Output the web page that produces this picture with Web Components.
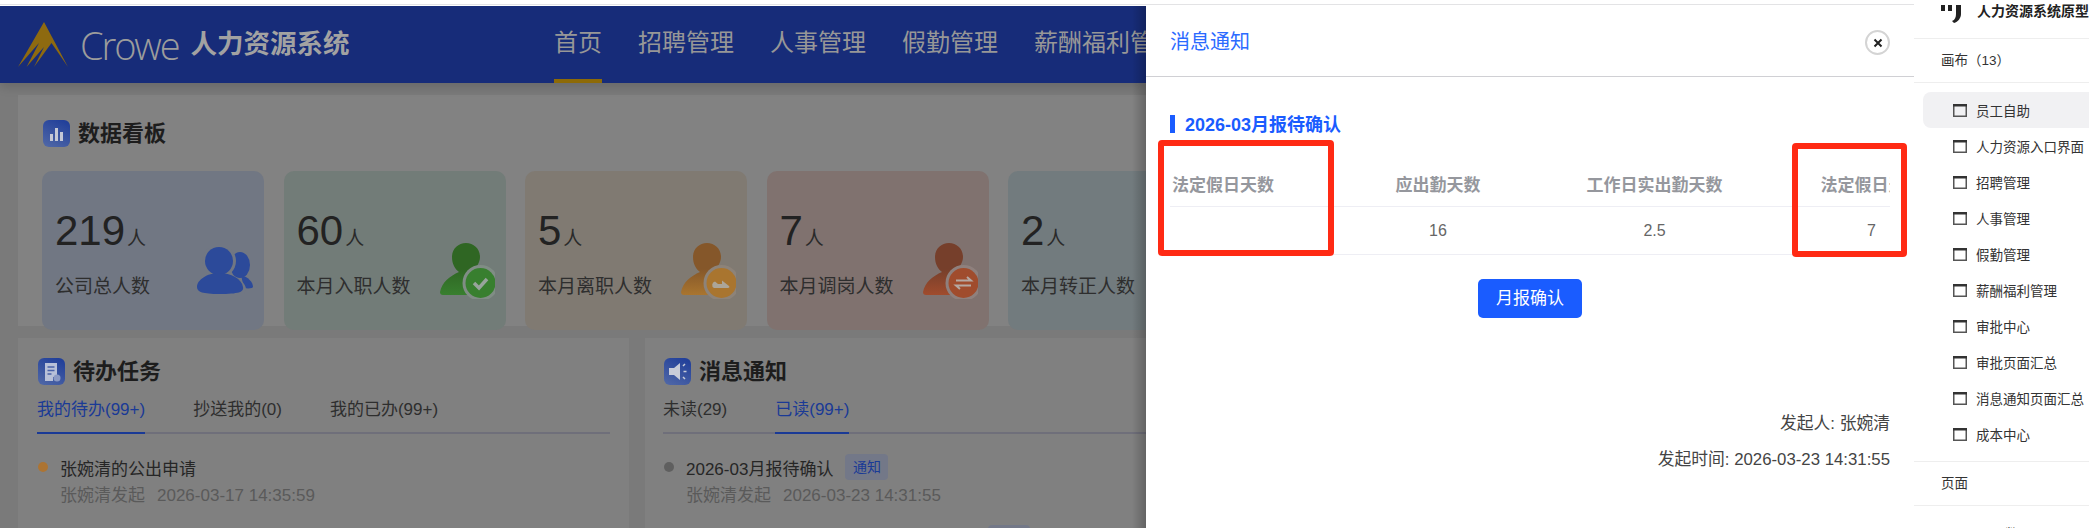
<!DOCTYPE html>
<html lang="zh">
<head>
<meta charset="utf-8">
<title>Crowe</title>
<style>
	html, body { margin: 0; padding: 0; background: #fff; }
	body { width: 2089px; height: 528px; overflow: hidden; font-family: "Liberation Sans", "Noto Sans CJK SC", sans-serif; }
</style>
</head>
<body>
<hr-shot>
	<hr-dashboard slot="left"></hr-dashboard>
	<hr-drawer slot="middle"></hr-drawer>
	<hr-sidebar slot="right"></hr-sidebar>
</hr-shot>
<script>
const FONT = `"Liberation Sans", "Noto Sans CJK SC", sans-serif`;

class Shot extends HTMLElement {
	constructor() {
		super();
		this.attachShadow({ mode: 'open' });
		this.shadowRoot.innerHTML = `
			<style>
				:host { display: grid; grid-template-columns: 1914px 175px; width: 2089px; height: 528px; overflow: hidden; background: #fff; font-family: ${FONT}; }
				div.top { height: 4px; border-bottom: 1px solid #e3e3e5; margin-bottom: 1px; }
				div.row { display: grid; grid-template-columns: 1146px 768px; height: 522px; }
				::slotted(*) { min-width: 0; }
			</style>
			<div>
				<div class="top"></div>
				<div class="row">
					<slot name="left"></slot>
					<slot name="middle"></slot>
				</div>
			</div>
			<slot name="right"></slot>
		`;
	}
}

// person with a round badge, head goes darker to the top like the original png
const personIcon = (id, dark, light, halo, badge) => `
	<svg slot="icon" width="55" height="56" viewBox="0 0 55 56">
		<defs><linearGradient id="${id}" x1="0" y1="0" x2="0" y2="1"><stop offset="0" stop-color="${dark}"/><stop offset=".5" stop-color="${dark}"/><stop offset="1" stop-color="${light}"/></linearGradient></defs>
		<path d="M26 0c8 0 14 6 14 14 0 6-4 11-8 14l3 2c5 3 8 8 8 14 0 5-3 8-6 8H3c-2 0-3-1-3-3 2-10 10-16 19-20-4-3-7-8-7-15C12 6 18 0 26 0z" fill="url(#${id})"/>
		<circle cx="40.500" cy="40" r="18" fill="${halo}"/>
		<circle cx="40.500" cy="40" r="15" fill="${light}"/>
		${badge}
	</svg>`;

class StatCard extends HTMLElement {
	constructor() {
		super();
		this.attachShadow({ mode: 'open' });
		this.shadowRoot.innerHTML = `
			<style>
				:host { display: block; box-sizing: border-box; height: 159px; border-radius: 10px; padding: 35px 0 0 13px; position: relative; background: var(--bg); color: #222; }
				div.num { font-size: 42px; line-height: 50px; height: 50px; white-space: nowrap; }
				div.num span { font-size: 19px; line-height: 20px; margin-left: 2px; color: #2a2a2a; }
				div.label { font-size: 19px; line-height: 24px; margin-top: 19px; color: #2e2e2e; white-space: nowrap; }
				div.icon { position: absolute; right: 11px; top: var(--icon-top, 72px); line-height: 0; }
			</style>
			<div class="num"><slot name="num"></slot><span><slot name="unit"></slot></span></div>
			<div class="label"><slot name="label"></slot></div>
			<div class="icon"><slot name="icon"></slot></div>
		`;
	}
}

class PanelTitle extends HTMLElement {
	constructor() {
		super();
		this.attachShadow({ mode: 'open' });
		this.shadowRoot.innerHTML = `
			<style>
				:host { display: flex; align-items: center; gap: 8px; height: 27px; font-size: 22px; font-weight: 700; color: #1d1d1d; }
				span { margin-top: -5px; }
			</style>
			<slot name="icon"></slot><span><slot></slot></span>
		`;
	}
}

class TabBar extends HTMLElement {
	constructor() {
		super();
		this.attachShadow({ mode: 'open' });
		this.shadowRoot.innerHTML = `
			<style>
				:host { display: flex; align-items: flex-start; gap: 48px; border-bottom: 2px solid #6f6f7a; height: 34px; margin: 13px 0 0 -1px; font-size: 17px; }
			</style>
			<slot></slot>
		`;
	}
}

class TabItem extends HTMLElement {
	constructor() {
		super();
		this.attachShadow({ mode: 'open' });
		this.shadowRoot.innerHTML = `
			<style>
				:host { display: block; height: 34px; line-height: 24px; color: #2e2e2e; box-sizing: border-box; white-space: nowrap; }
				:host([active]) { color: #1a3a96; border-bottom: 2px solid #1a3a96; height: 36px; }
			</style>
			<slot></slot>
		`;
	}
}

class MsgRow extends HTMLElement {
	constructor() {
		super();
		this.attachShadow({ mode: 'open' });
		this.shadowRoot.innerHTML = `
			<style>
				:host { display: grid; grid-template-columns: 22px auto; row-gap: 6px; margin-top: 21px; }
				i { width: 10px; height: 10px; border-radius: 50%; background: var(--dot); align-self: center; }
				div.t { height: 24px; font-size: 17px; color: #262626; display: flex; align-items: center; white-space: nowrap; }
				div.s { grid-column: 2; font-size: 17px; line-height: 22px; color: #5a5a5a; display: flex; gap: 12px; white-space: nowrap; }
			</style>
			<i></i>
			<div class="t"><slot name="title"></slot></div>
			<div class="s"><slot name="sub"></slot></div>
		`;
	}
}

class Dashboard extends HTMLElement {
	constructor() {
		super();
		this.attachShadow({ mode: 'open' });
		const ico = (inner) => `<svg slot="icon" width="27" height="27" viewBox="0 0 27 27"><defs><linearGradient id="tg" x1=".7" y1="0" x2=".2" y2="1"><stop offset="0" stop-color="#22409a"/><stop offset="1" stop-color="#4e66a6"/></linearGradient></defs><rect width="27" height="27" rx="6" fill="url(#tg)"/>${inner}</svg>`;
		this.shadowRoot.innerHTML = `
			<style>
				:host { display: block; position: relative; height: 522px; overflow: hidden; background: #7a7a7a; }
				:host::after { content: ''; position: absolute; top: 0; right: 0; bottom: 0; width: 14px; background: linear-gradient(to right, rgba(0,0,0,0), rgba(0,0,0,.22)); z-index: 2; }
				header { position: relative; z-index: 1; height: 77px; background: #172c79; display: flex; overflow: hidden; box-shadow: 0 4px 10px rgba(0,0,0,.14); }
				div.logo { flex: none; width: 554px; box-sizing: border-box; padding-left: 18px; display: flex; align-items: center; }
				b.crowe { font-family: "Open Sans", ${FONT}; font-weight: 300; font-size: 38px; letter-spacing: -2.1px; margin-left: 12px; color: #9c9c9c; }
				b.sys { font-size: 26.500px; line-height: 30px; font-weight: 700; margin: -2px 0 0 12px; color: #a2a2a2; white-space: nowrap; }
				nav { flex: none; display: flex; gap: 36px; font-size: 24px; white-space: nowrap; }
				nav a { display: block; height: 77px; box-sizing: border-box; padding-top: 20px; line-height: 33px; color: #979797; }
				nav a.on { border-bottom: 4px solid #8d6a07; }
				section.board { margin: 12px 0 0 18px; height: 231px; box-sizing: border-box; background: #828282; padding: 25px 0 0 24px; }
				section.board hr-title { margin-left: 1px; }
				div.cards { display: grid; grid-template-columns: repeat(5, 222px); column-gap: 19.5px; margin-top: 24px; }
				div.lower { display: flex; margin: 12px 0 0 18px; gap: 16px; height: 300px; }
				section.pan { background: #808080; box-sizing: border-box; padding-top: 20px; }
				section.a { flex: none; width: 611px; padding: 20px 19px 0 20px; }
				section.b { flex: 1; padding-left: 19px; }
				span.tag { font-size: 14px; line-height: 26px; height: 26px; width: 43px; text-align: center; color: #1a3a96; background: #737888; border-radius: 4px; margin-left: 12px; }
				div.next { width: 42px; height: 26px; background: #737888; border-radius: 4px; margin: 18px 0 0 324px; }
			</style>
			<header>
				<div class="logo">
					<svg width="50" height="45" viewBox="0 0 50 45">
						<path d="M26 0L50 45 33.500 21 16 45 26 25 8.500 45 21 21 0 45z" fill="#8e6a10"/>
					</svg>
					<b class="crowe">Crowe</b><b class="sys">人力资源系统</b>
				</div>
				<nav>
					<a class="on">首页</a><a>招聘管理</a><a>人事管理</a><a>假勤管理</a><a>薪酬福利管理</a>
				</nav>
			</header>
			<section class="board">
				<hr-title>${ico('<path d="M7 21v-7h3v7zM12 21V8h3v13zM17 21v-9h3v9z" fill="#c4c8d6"/>')}数据看板</hr-title>
				<div class="cards">
					<hr-stat style="--bg:#717783;--icon-top:76px">
						<span slot="num">219</span><span slot="unit">人</span><span slot="label">公司总人数</span>
						<svg slot="icon" width="56" height="47" viewBox="0 0 56 47">
							<ellipse cx="43" cy="18" rx="10" ry="13" fill="#2c4a9a"/>
							<path d="M44 28c7 2 12 7 12 12 0 1-4 2-9 1z" fill="#2c4a9a"/>
							<ellipse cx="22" cy="14" rx="17" ry="17" fill="#717783"/>
							<path d="M22 27c13 0 26 6 27 15l-2 5H1c-1-9 8-20 21-20z" fill="#717783"/>
							<ellipse cx="22" cy="14" rx="14" ry="14" fill="#2c4a9a"/>
							<path d="M22 26c12 0 23 6 24 14 1 5-4 7-24 7C6 47 0 45 0 40c0-7 10-14 22-14z" fill="#2c4a9a"/>
						</svg>
					</hr-stat>
					<hr-stat style="--bg:#727c78">
						<span slot="num">60</span><span slot="unit">人</span><span slot="label">本月入职人数</span>
						${personIcon('pg', '#2f6623', '#387f2f', '#808d85', '<path d="M34 40l5 5 8-9" fill="none" stroke="#98a49c" stroke-width="3.500"/>')}
					</hr-stat>
					<hr-stat style="--bg:#807a72">
						<span slot="num">5</span><span slot="unit">人</span><span slot="label">本月离职人数</span>
						${personIcon('po', '#85572a', '#a9752f', '#8d8379', '<path d="M33 45a3.500 3.500 0 0 1 1-6.500l3 2.500h4v-3.500l7 5.500c1 1 0 2-1 2z" fill="#aca598"/>')}
					</hr-stat>
					<hr-stat style="--bg:#80726f">
						<span slot="num">7</span><span slot="unit">人</span><span slot="label">本月调岗人数</span>
						${personIcon('pr', '#763f2b', '#a04c2d', '#8f807d', '<path d="M33 37.500h15l-4-3.500M48 42.500H33l4 3.500" fill="none" stroke="#b5a8a2" stroke-width="2"/>')}
					</hr-stat>
					<hr-stat style="--bg:#727b7e">
						<span slot="num">2</span><span slot="unit">人</span><span slot="label">本月转正人数</span>
					</hr-stat>
				</div>
			</section>
			<div class="lower">
				<section class="pan a">
					<hr-title>${ico('<path d="M7 5h12v14h-4v4H7z" fill="#b8c0d8"/><path d="M9.500 9h7M9.500 12.500h7M9.500 16h4" stroke="#4a62a8" stroke-width="1.300"/><circle cx="19" cy="20" r="3.500" fill="#8c9ac4"/>')}待办任务</hr-title>
					<hr-tabs>
						<hr-tab active>我的待办(99+)</hr-tab><hr-tab>抄送我的(0)</hr-tab><hr-tab>我的已办(99+)</hr-tab>
					</hr-tabs>
					<hr-msg style="--dot:#ac7433">
						<span slot="title">张婉清的公出申请</span>
						<span slot="sub">张婉清发起</span><span slot="sub">2026-03-17 14:35:59</span>
					</hr-msg>
				</section>
				<section class="b pan">
					<hr-title>${ico('<path d="M5 10h5l6-5v17l-6-5H5z" fill="#c8ccd8"/><path d="M19 8l2-2M19.500 13.500h3M19 19l2 2" stroke="#c8ccd8" stroke-width="1.500"/>')}消息通知</hr-title>
					<hr-tabs>
						<hr-tab>未读(29)</hr-tab><hr-tab active>已读(99+)</hr-tab>
					</hr-tabs>
					<hr-msg style="--dot:#5f5f5f">
						<span slot="title">2026-03月报待确认</span><span slot="title" class="tag">通知</span>
						<span slot="sub">张婉清发起</span><span slot="sub">2026-03-23 14:31:55</span>
					</hr-msg>
					<div class="next"></div>
				</section>
			</div>
		`;
	}
}

class Drawer extends HTMLElement {
	constructor() {
		super();
		this.attachShadow({ mode: 'open' });
		this.shadowRoot.innerHTML = `
			<style>
				:host { display: block; height: 522px; background: #fff; position: relative; }
				div.head { height: 71px; border-bottom: 1px solid #d0d0d4; box-sizing: border-box; padding: 23px 0 0 24px; font-size: 20px; line-height: 27px; color: #2b6bff; position: relative; }
				div.close { position: absolute; right: 24px; top: 24px; width: 25px; height: 25px; border-radius: 50%; border: 2px solid #d4d4d4; box-sizing: border-box; display: flex; align-items: center; justify-content: center; }
				div.body { padding: 38px 24px 0; }
				div.sub { border-left: 5px solid #1a5cff; padding-left: 10px; font-size: 18px; font-weight: 700; height: 18px; line-height: 20px; color: #1a5cff; }
				div.wrap { margin-top: 27px; overflow: hidden; }
				div.table { display: grid; grid-template-columns: 160px 216px 217px 217px; grid-template-rows: 47px 48px; width: 810px; }
				div.table > span { display: flex; align-items: center; justify-content: center; white-space: nowrap; box-sizing: border-box; border-bottom: 1px solid #eeeef4; }
				div.table > .h { color: #95979d; font-size: 17px; font-weight: 700; }
				div.table > .d { color: #666; font-size: 16px; }
				div.table > .first { justify-content: flex-start; padding-left: 2px; }
				div.btns { display: flex; justify-content: center; margin-top: 24px; }
				div.btn { width: 104px; height: 39px; line-height: 39px; text-align: center; color: #fff; background: #1a5cff; font-size: 17px; border-radius: 5px; }
				div.meta { text-align: right; font-size: 16.800px; line-height: 36px; color: #444; margin-top: 88px; }
				.mark { position: absolute; border: 6px solid #ff2a14; border-radius: 4px; box-sizing: border-box; }
			</style>
			<div class="head">
				消息通知
				<div class="close"><svg width="10" height="10" viewBox="0 0 10 10"><path d="M1.500 1.500l7 7M8.500 1.500l-7 7" stroke="#222" stroke-width="2"/></svg></div>
			</div>
			<div class="body">
				<div class="sub">2026-03月报待确认</div>
				<div class="wrap">
					<div class="table">
						<span class="h first">法定假日天数</span>
						<span class="h">应出勤天数</span>
						<span class="h">工作日实出勤天数</span>
						<span class="h">法定假日天数</span>
						<span class="d first"></span><span class="d">16</span><span class="d">2.5</span><span class="d">7</span>
					</div>
				</div>
				<div class="btns"><div class="btn">月报确认</div></div>
				<div class="meta">发起人: 张婉清<br>发起时间: 2026-03-23 14:31:55</div>
			</div>
			<div class="mark" style="left:12px;top:134px;width:176px;height:116px"></div>
			<div class="mark" style="left:646px;top:137px;width:115px;height:114px"></div>
		`;
	}
}

class SideItem extends HTMLElement {
	constructor() {
		super();
		this.attachShadow({ mode: 'open' });
		this.shadowRoot.innerHTML = `
			<style>
				:host { display: flex; align-items: center; height: 36px; padding-left: 30px; gap: 9px; font-size: 13.5px; color: #333; white-space: nowrap; border-radius: 8px 0 0 8px; }
				:host([current]) { background: #f1f1f3; }
				svg { flex: none; }
			</style>
			<svg width="14" height="13" viewBox="0 0 14 13"><rect x=".75" y="1" width="12.500" height="11.250" fill="none" stroke="#555" stroke-width="1.500"/><path d="M0 1.250h14" stroke="#333" stroke-width="2.500"/></svg>
			<slot></slot>
		`;
	}
}

class Sidebar extends HTMLElement {
	constructor() {
		super();
		this.attachShadow({ mode: 'open' });
		this.shadowRoot.innerHTML = `
			<style>
				:host { display: block; height: 528px; background: #fff; overflow: hidden; font-size: 13.5px; color: #333; }
				div.brand { height: 38px; box-sizing: content-box; border-bottom: 1px solid #eeeeee; padding-left: 27px; display: flex; gap: 16px; font-size: 14px; font-weight: 700; color: #222; white-space: nowrap; line-height: 22px; }
				div.sec { height: 43px; border-bottom: 1px solid #eeeeee; line-height: 43px; padding-left: 27px; font-size: 13.5px; }
				div.list { padding: 9px 0 9px 9px; border-bottom: 1px solid #eeeeee; }
				div.more { padding-left: 91px; margin-top: 19px; line-height: 20px; white-space: nowrap; }
			</style>
			<div class="brand">
				<svg width="20" height="18" viewBox="0 0 20 18" style="margin-top:5px"><path d="M0 0h4v6H0zM7 0h4v6H7zM15 0h5v9c0 4-3 8-7 9l-2-2c3-1 4-4 4-7z" fill="#222"/></svg>
				人力资源系统原型
			</div>
			<div class="sec">画布（13）</div>
			<div class="list">
				<hr-side current>员工自助</hr-side>
				<hr-side>人力资源入口界面</hr-side>
				<hr-side>招聘管理</hr-side>
				<hr-side>人事管理</hr-side>
				<hr-side>假勤管理</hr-side>
				<hr-side>薪酬福利管理</hr-side>
				<hr-side>审批中心</hr-side>
				<hr-side>审批页面汇总</hr-side>
				<hr-side>消息通知页面汇总</hr-side>
				<hr-side>成本中心</hr-side>
			</div>
			<div class="sec">页面</div>
			<div class="more">数景页面</div>
		`;
	}
}

customElements.define('hr-shot', Shot);
customElements.define('hr-stat', StatCard);
customElements.define('hr-title', PanelTitle);
customElements.define('hr-tabs', TabBar);
customElements.define('hr-tab', TabItem);
customElements.define('hr-msg', MsgRow);
customElements.define('hr-dashboard', Dashboard);
customElements.define('hr-drawer', Drawer);
customElements.define('hr-side', SideItem);
customElements.define('hr-sidebar', Sidebar);
</script>
</body>
</html>
